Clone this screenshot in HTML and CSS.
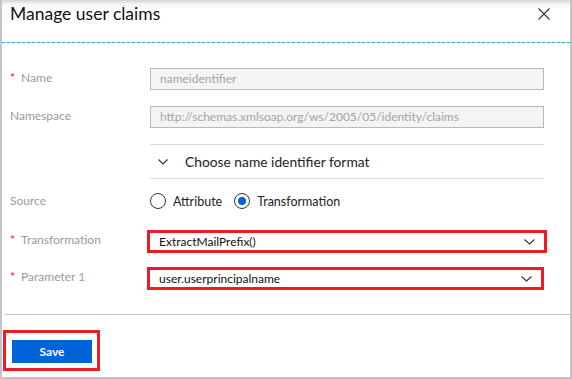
FILE: index.html
```html
<!DOCTYPE html>
<html lang="en">
<head>
  <meta charset="UTF-8" />
  <meta name="viewport" content="width=device-width, initial-scale=1" />
  <title>Manage user claims</title>
  <link rel="stylesheet" href="styles.css">
</head>
<body>
  <div class="panel">
    <div class="head">
      <h1>Manage user claims</h1>
      <button class="close" aria-label="Close">
        <svg width="12" height="12" viewBox="0 0 12 12"><path d="M0.5 0.5 L11.5 11.5 M11.5 0.5 L0.5 11.5" stroke="#333" stroke-width="1.1" fill="none"/></svg>
      </button>
    </div>

    <div class="form">
      <div class="row">
        <label class="lbl req">Name</label>
        <div class="field ro">nameidentifier</div>
      </div>
      <div class="row">
        <label class="lbl">Namespace</label>
        <div class="field ro">http://schemas.xmlsoap.org/ws/2005/05/identity/claims</div>
      </div>
      <div class="row">
        <span></span>
        <div class="chooser">
          <svg width="10" height="6" viewBox="0 0 10 6"><path d="M0.5 0.5 L5 5 L9.5 0.5" stroke="#333" stroke-width="1.1" fill="none"/></svg>
          <span>Choose name identifier format</span>
        </div>
      </div>
      <div class="row source">
        <label class="lbl">Source</label>
        <div class="radios">
          <span class="radio"><span class="dot"></span>Attribute</span>
          <span class="radio on"><span class="dot"></span>Transformation</span>
        </div>
      </div>
      <div class="row sel-row">
        <label class="lbl req">Transformation</label>
        <div class="select hl">
          <span>ExtractMailPrefix()</span>
          <svg width="11" height="6" viewBox="0 0 11 6"><path d="M0.5 0.5 L5.5 5 L10.5 0.5" stroke="#333" stroke-width="1.1" fill="none"/></svg>
        </div>
      </div>
      <div class="row sel-row second">
        <label class="lbl req">Parameter 1</label>
        <div class="select hl">
          <span>user.userprincipalname</span>
          <svg width="11" height="6" viewBox="0 0 11 6"><path d="M0.5 0.5 L5.5 5 L10.5 0.5" stroke="#333" stroke-width="1.1" fill="none"/></svg>
        </div>
      </div>
    </div>

    <div class="foot">
      <div class="save-hl">
        <button class="save">Save</button>
      </div>
    </div>
  </div>
</body>
</html>
```

FILE: styles.css
```css
body {
  margin: 0;
  font-family: Lato, "Open Sans", sans-serif;
  background: #fff;
  color: #333;
}
.panel {
  width: 572px;
  height: 379px;
  box-sizing: border-box;
  border: 2px solid #c4c4c4;
  border-top: none;
  background: #fff;
}
.head {
  height: 43px;
  box-sizing: border-box;
  display: flex;
  justify-content: space-between;
  align-items: flex-start;
  padding: 0 20px 0 8px;
  border-bottom: 1px dashed #2aa8e0;
  background: linear-gradient(#d4d4d4 0, #f4f4f4 4px, #fff 9px);
}
.head h1 {
  margin: 0;
  padding-top: 3px;
  font-size: 17.5px;
  font-weight: 400;
  color: #111;
}
.close {
  margin-top: 8px;
  border: none;
  background: none;
  padding: 0;
  width: 12px;
  height: 12px;
}
.close svg {
  display: block;
}
.form {
  padding: 25px 0 0 8px;
}
.row {
  display: grid;
  grid-template-columns: 140px 394px;
  margin-bottom: 16px;
}
.lbl {
  font-size: 12px;
  color: #9a9a9a;
  padding-top: 2px;
  line-height: 16px;
}
.lbl.req::before {
  content: "*";
  color: #e81123;
  margin-right: 6px;
}
.field {
  height: 22px;
  box-sizing: border-box;
  border: 1px solid #b9b9b9;
  padding: 0 9px;
  font-size: 12px;
  line-height: 20px;
  white-space: nowrap;
  overflow: hidden;
}
.field.ro {
  background: #f4f4f4;
  color: #a3a3a3;
}
.chooser {
  height: 35px;
  box-sizing: border-box;
  border-top: 1px solid #dcdcdc;
  border-bottom: 1px solid #dcdcdc;
  display: flex;
  align-items: center;
  padding-left: 8px;
  gap: 17px;
  font-size: 13.8px;
  color: #222;
}
.row.source {
  margin-top: -2px;
  margin-bottom: 21px;
}
.row.source .lbl {
  padding-top: 0;
}
.radios {
  display: flex;
  gap: 12px;
  font-size: 12.5px;
  color: #222;
}
.radio {
  display: flex;
  align-items: center;
  gap: 7px;
}
.radio .dot {
  width: 16px;
  height: 16px;
  box-sizing: border-box;
  border: 1px solid #333;
  border-radius: 50%;
  display: flex;
  align-items: center;
  justify-content: center;
}
.radio.on .dot::after {
  content: "";
  width: 8px;
  height: 8px;
  border-radius: 50%;
  background: #0063d8;
}
.sel-row {
  margin-bottom: 14px;
}
.sel-row .lbl {
  padding-top: 2px;
}
.select {
  height: 23px;
  box-sizing: border-box;
  display: flex;
  align-items: center;
  justify-content: space-between;
  padding: 0 9px 0 9px;
  font-size: 12px;
  color: #111;
  background: #fff;
}
.select.hl {
  border: 3px solid #ed1c24;
  margin-left: -3px;
  width: 400px;
}
.second .select.hl {
  width: 397px;
}
.foot {
  margin: 24px 0 0 3px;
  border-top: 1px solid #c4c4c4;
  padding-top: 15px;
}
.save-hl {
  width: 97px;
  height: 41px;
  box-sizing: border-box;
  border: 3px solid #ed1c24;
  margin-left: -2px;
  padding: 7px 0 0 6px;
}
.save {
  width: 80px;
  height: 23px;
  border: none;
  background: #0063d8;
  color: #fff;
  font-family: Lato, "Open Sans", sans-serif;
  font-size: 12px;
  font-weight: 700;
  padding: 0;
}
```
